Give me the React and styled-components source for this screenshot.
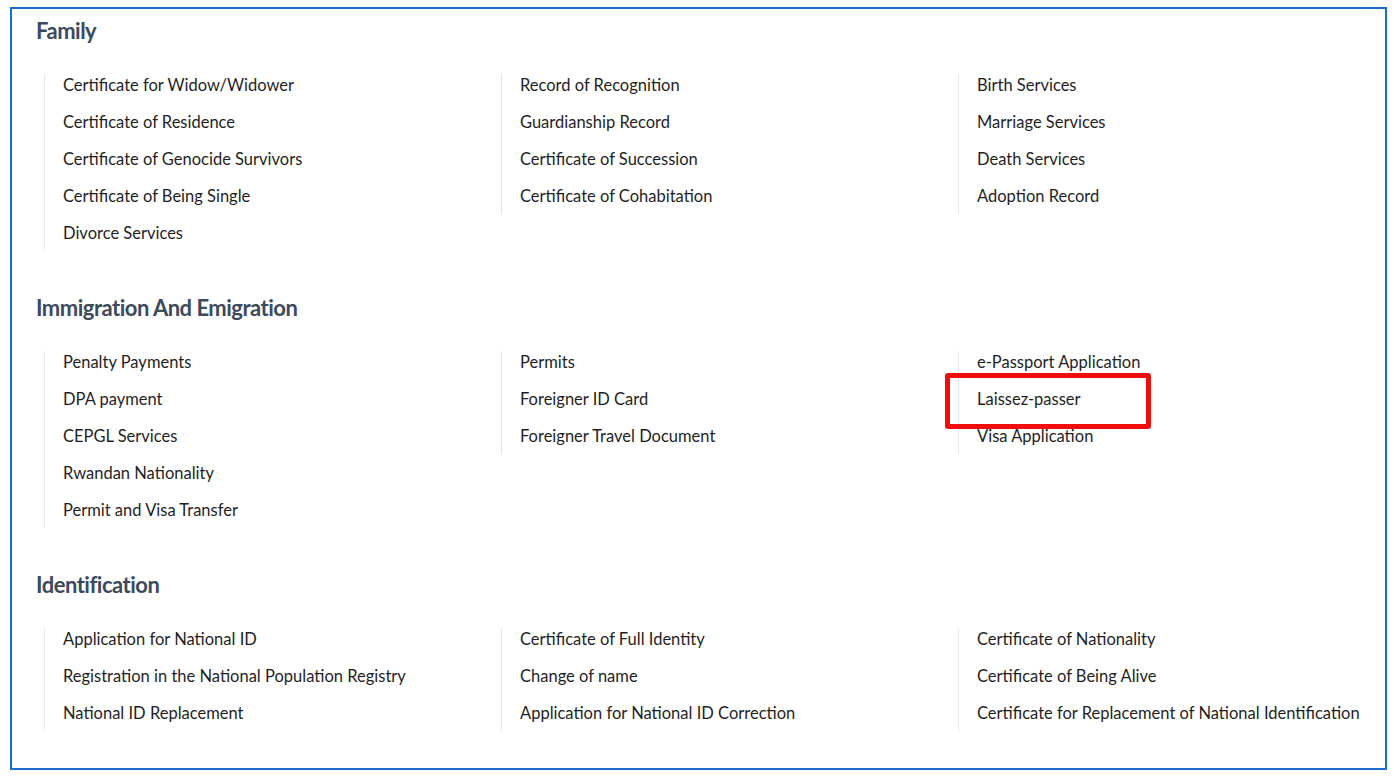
import React from "react";
import styled, { createGlobalStyle } from "styled-components";

const SECTIONS = [
  {
    title: "Family",
    columns: [
      [
        "Certificate for Widow/Widower",
        "Certificate of Residence",
        "Certificate of Genocide Survivors",
        "Certificate of Being Single",
        "Divorce Services",
      ],
      [
        "Record of Recognition",
        "Guardianship Record",
        "Certificate of Succession",
        "Certificate of Cohabitation",
      ],
      ["Birth Services", "Marriage Services", "Death Services", "Adoption Record"],
    ],
  },
  {
    title: "Immigration And Emigration",
    columns: [
      [
        "Penalty Payments",
        "DPA payment",
        "CEPGL Services",
        "Rwandan Nationality",
        "Permit and Visa Transfer",
      ],
      ["Permits", "Foreigner ID Card", "Foreigner Travel Document"],
      ["e-Passport Application", "Laissez-passer", "Visa Application"],
    ],
  },
  {
    title: "Identification",
    columns: [
      [
        "Application for National ID",
        "Registration in the National Population Registry",
        "National ID Replacement",
      ],
      [
        "Certificate of Full Identity",
        "Change of name",
        "Application for National ID Correction",
      ],
      [
        "Certificate of Nationality",
        "Certificate of Being Alive",
        "Certificate for Replacement of National Identification",
      ],
    ],
  },
];

const HIGHLIGHTED = "Laissez-passer";

export default function App() {
  return (
    <>
      <GlobalStyle />
      <Frame>
        {SECTIONS.map((section) => (
          <Section key={section.title}>
            <Heading>{section.title}</Heading>
            <Columns>
              {section.columns.map((items, i) => (
                <List key={i}>
                  {items.map((item) => (
                    <Item key={item} $marked={item === HIGHLIGHTED}>
                      {item}
                    </Item>
                  ))}
                </List>
              ))}
            </Columns>
          </Section>
        ))}
      </Frame>
    </>
  );
}

const GlobalStyle = createGlobalStyle`
  body {
    margin: 0;
    background: #ffffff;
    font-family: Lato, "Noto Sans", sans-serif;
  }
`;

const Frame = styled.div`
  box-sizing: border-box;
  width: 1377px;
  height: 763px;
  margin: 7px 0 0 10px;
  padding: 10px 24px 0;
  border: 2px solid #1c6ccf;
  display: flex;
  flex-direction: column;
  gap: 45px;
`;

const Section = styled.section`
  display: flex;
  flex-direction: column;
  gap: 31px;
`;

const Heading = styled.h2`
  margin: 0;
  font-size: 22px;
  line-height: 24px;
  font-weight: 700;
  letter-spacing: -0.5px;
  color: #3d4a5b;
`;

const Columns = styled.div`
  display: grid;
  grid-template-columns: 457px 457px 1fr;
  align-items: start;
  margin-left: 8px;
`;

const List = styled.ul`
  list-style: none;
  margin: 0;
  padding: 1px 0 8px 18px;
  border-left: 1px solid #e4e8f0;
  display: flex;
  flex-direction: column;
  gap: 17px;
`;

const Item = styled.li`
  position: relative;
  font-size: 16.5px;
  line-height: 20px;
  color: #1f1f1f;
  white-space: nowrap;

  ${({ $marked }) =>
    $marked &&
    `
    &::after {
      content: "";
      position: absolute;
      left: -32px;
      top: -16px;
      width: 196px;
      height: 46px;
      border: 5px solid #f20d0d;
      border-radius: 3px;
    }
  `}
`;
